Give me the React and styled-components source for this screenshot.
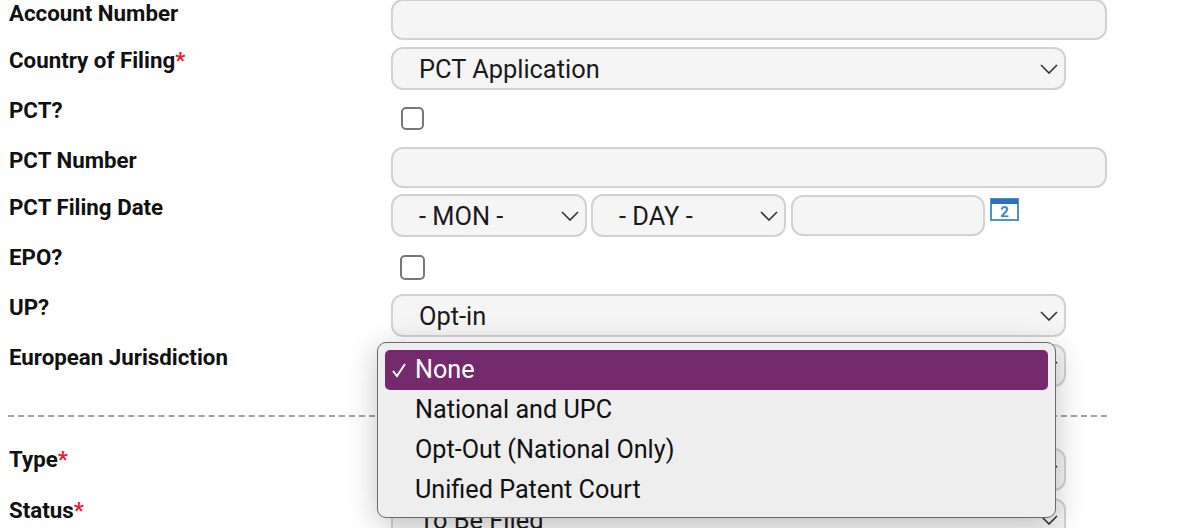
import React from "react";
import styled, { createGlobalStyle } from "styled-components";

const GlobalStyle = createGlobalStyle`
  html, body {
    margin: 0;
    padding: 0;
    background: #fff;
  }
  body {
    font-family: Roboto, "Liberation Sans", sans-serif;
    color: #111;
  }
`;

function Select({ children, width, top }) {
  return (
    <SelectBox $width={width} $top={top}>
      <span>{children}</span>
      <svg width="18" height="10" viewBox="0 0 18 10" fill="none" stroke="#333" strokeWidth="1.6">
        <path d="M1 1l8 8 8-8" />
      </svg>
    </SelectBox>
  );
}

function Required() {
  return <Star>*</Star>;
}

function CalendarIcon() {
  return (
    <CalendarSvg width="29" height="23" viewBox="0 0 29 23">
      <rect x="1" y="1" width="27" height="21" fill="#fff" stroke="#4a92d2" strokeWidth="2" />
      <rect x="1" y="1" width="27" height="5" fill="#2a74b5" />
      <text x="14.5" y="19" textAnchor="middle" fontSize="15" fontWeight="700" fontFamily="Roboto, sans-serif" fill="#3b86c8">
        2
      </text>
    </CalendarSvg>
  );
}

export default function App() {
  return (
    <Page>
      <GlobalStyle />
      <Row $height={47}>
        <Label>Account Number</Label>
        <TextInput $top={-1} />
      </Row>
      <Row $height={50}>
        <Label>
          Country of Filing
          <Required />
        </Label>
        <Select width={675}>PCT Application</Select>
      </Row>
      <Row $height={50}>
        <Label>PCT?</Label>
        <Checkbox type="checkbox" $top={10} $left={10} />
      </Row>
      <Row $height={47}>
        <Label>PCT Number</Label>
        <TextInput />
      </Row>
      <Row $height={50}>
        <Label>PCT Filing Date</Label>
        <DateFields>
          <Select width={196}>- MON -</Select>
          <Select width={195}>- DAY -</Select>
          <YearInput $top={1} />
          <CalendarIcon />
        </DateFields>
      </Row>
      <Row $height={50}>
        <Label>EPO?</Label>
        <Checkbox type="checkbox" $top={11} $left={9} $size={25} />
      </Row>
      <Row $height={50}>
        <Label>UP?</Label>
        <Select width={675}>Opt-in</Select>
      </Row>
      <Row $height={60}>
        <Label>European Jurisdiction</Label>
        <Select width={675}>None</Select>
      </Row>
      <Divider />
      <Row $height={51}>
        <Label>
          Type
          <Required />
        </Label>
        <Select width={675} top={2}>&nbsp;</Select>
      </Row>
      <Row $height={50}>
        <Label>
          Status
          <Required />
        </Label>
        <Select width={675} top={1}>To Be Filed</Select>
      </Row>

      <Menu>
        <MenuItem $selected>
          <svg width="16" height="16" viewBox="0 0 16 16" fill="none" stroke="#fff" strokeWidth="2">
            <path d="M2 9l4 5L14 2" />
          </svg>
          None
        </MenuItem>
        <MenuItem>National and UPC</MenuItem>
        <MenuItem>Opt-Out (National Only)</MenuItem>
        <MenuItem>Unified Patent Court</MenuItem>
      </Menu>
    </Page>
  );
}

const Page = styled.div`
  position: relative;
  width: 1188px;
  height: 528px;
  overflow: hidden;
  background: #fff;
`;

const Row = styled.div`
  display: grid;
  grid-template-columns: 391px 716px;
  align-items: start;
  height: ${(p) => p.$height}px;
`;

const Label = styled.label`
  margin-top: 1px;
  padding-left: 9px;
  font-size: 22.3px;
  line-height: 24px;
  font-weight: 700;
  color: #111;
`;

const Star = styled.span`
  color: #f0182c;
`;

const TextInput = styled.input`
  display: block;
  box-sizing: border-box;
  width: 716px;
  height: 41px;
  margin-top: ${(p) => p.$top || 0}px;
  background: #f5f5f5;
  border: 2px solid #d2d2d2;
  border-radius: 12px;
  outline: none;
`;

const SelectBox = styled.div`
  display: flex;
  align-items: center;
  justify-content: space-between;
  box-sizing: border-box;
  width: ${(p) => p.$width}px;
  height: 43px;
  margin-top: ${(p) => p.$top || 0}px;
  padding: 0 6px 0 26px;
  background: #f5f5f5;
  border: 2px solid #d2d2d2;
  border-radius: 12px;
  font-size: 25.4px;
  color: #1a1a1a;

  svg {
    flex: none;
  }
`;

const Checkbox = styled.input`
  appearance: none;
  display: block;
  width: ${(p) => p.$size || 23}px;
  height: ${(p) => p.$size || 23}px;
  box-sizing: border-box;
  margin: ${(p) => p.$top}px 0 0 ${(p) => p.$left}px;
  background: #fff;
  border: 2px solid #777;
  border-radius: 5px;
`;

const DateFields = styled.div`
  display: flex;
  align-items: flex-start;
  gap: 4px;
`;

const YearInput = styled(TextInput)`
  width: 194px;
  margin-left: 1px;
`;

const CalendarSvg = styled.svg`
  flex: none;
  margin: 4px 0 0 1px;
`;

const Divider = styled.hr`
  box-sizing: border-box;
  width: 1099px;
  height: 0;
  margin: 11px 0 29px 8px;
  border: none;
  border-top: 2px dashed #a2a2a2;
`;

const Menu = styled.div`
  position: absolute;
  left: 377px;
  top: 342px;
  width: 679px;
  height: 176px;
  box-sizing: border-box;
  padding: 7px;
  background: #eeeeee;
  border: 1.5px solid #6a6a6a;
  border-radius: 9px;
  box-shadow: 0 6px 30px rgba(0, 0, 0, 0.24);
`;

const MenuItem = styled.div`
  position: relative;
  display: flex;
  align-items: center;
  height: 40px;
  padding: 0 0 2px 30px;
  box-sizing: border-box;
  border-radius: 5px;
  font-size: 25.2px;
  color: ${(p) => (p.$selected ? "#fff" : "#111")};
  background: ${(p) => (p.$selected ? "#752a6d" : "transparent")};

  svg {
    position: absolute;
    left: 6px;
    top: 12px;
  }
`;
